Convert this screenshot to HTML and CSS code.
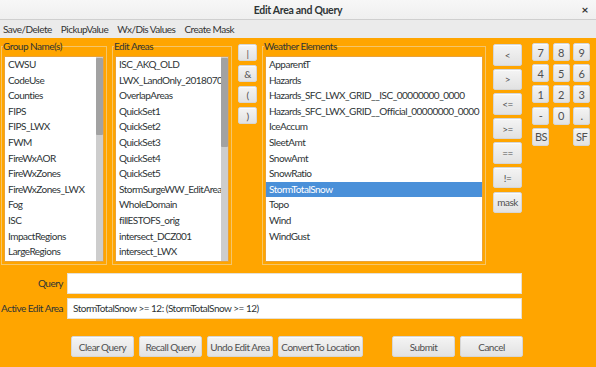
FILE: index.html
```html
<!DOCTYPE html>
<html lang="en">
<head>
    <meta charset="UTF-8">
    <meta name="viewport" content="width=device-width, initial-scale=1.0">
    <title>Edit Area and Query</title>
    <link rel="stylesheet" href="styles.css">
</head>
<body>
    <div class="titlebar">
        <span></span>
        <span class="title">Edit Area and Query</span>
        <span class="close">×</span>
    </div>

    <div class="menubar">
        <span>Save/Delete</span>
        <span>PickupValue</span>
        <span>Wx/Dis Values</span>
        <span>Create Mask</span>
    </div>

    <div class="main">
        <div class="top">
            <fieldset class="box box-groups">
                <legend>Group Name(s)</legend>
                <div class="list">
                    <div class="rows">
                        <div class="row">CWSU</div>
                        <div class="row">CodeUse</div>
                        <div class="row">Counties</div>
                        <div class="row">FIPS</div>
                        <div class="row">FIPS_LWX</div>
                        <div class="row">FWM</div>
                        <div class="row">FireWxAOR</div>
                        <div class="row">FireWxZones</div>
                        <div class="row">FireWxZones_LWX</div>
                        <div class="row">Fog</div>
                        <div class="row">ISC</div>
                        <div class="row">ImpactRegions</div>
                        <div class="row">LargeRegions</div>
                    </div>
                    <div class="scroll"><div class="thumb thumb-groups"></div></div>
                </div>
            </fieldset>

            <fieldset class="box box-areas">
                <legend>Edit Areas</legend>
                <div class="list">
                    <div class="rows">
                        <div class="row">ISC_AKQ_OLD</div>
                        <div class="row">LWX_LandOnly_20180706</div>
                        <div class="row">OverlapAreas</div>
                        <div class="row">QuickSet1</div>
                        <div class="row">QuickSet2</div>
                        <div class="row">QuickSet3</div>
                        <div class="row">QuickSet4</div>
                        <div class="row">QuickSet5</div>
                        <div class="row">StormSurgeWW_EditArea_</div>
                        <div class="row">WholeDomain</div>
                        <div class="row">fillESTOFS_orig</div>
                        <div class="row">intersect_DCZ001</div>
                        <div class="row">intersect_LWX</div>
                    </div>
                    <div class="scroll"><div class="thumb thumb-areas"></div></div>
                </div>
            </fieldset>

            <div class="ops ops-logic">
                <button class="btn">|</button>
                <button class="btn">&amp;</button>
                <button class="btn">(</button>
                <button class="btn">)</button>
            </div>

            <fieldset class="box box-weather">
                <legend>Weather Elements</legend>
                <div class="list">
                    <div class="rows">
                        <div class="row">ApparentT</div>
                        <div class="row">Hazards</div>
                        <div class="row">Hazards_SFC_LWX_GRID__ISC_00000000_0000</div>
                        <div class="row">Hazards_SFC_LWX_GRID__Official_00000000_0000</div>
                        <div class="row">IceAccum</div>
                        <div class="row">SleetAmt</div>
                        <div class="row">SnowAmt</div>
                        <div class="row">SnowRatio</div>
                        <div class="row selected">StormTotalSnow</div>
                        <div class="row">Topo</div>
                        <div class="row">Wind</div>
                        <div class="row">WindGust</div>
                    </div>
                </div>
            </fieldset>

            <div class="ops ops-compare">
                <button class="btn">&lt;</button>
                <button class="btn">&gt;</button>
                <button class="btn">&lt;=</button>
                <button class="btn">&gt;=</button>
                <button class="btn">==</button>
                <button class="btn">!=</button>
                <button class="btn">mask</button>
            </div>

            <div class="numpad">
                <button class="btn">7</button>
                <button class="btn">8</button>
                <button class="btn">9</button>
                <button class="btn">4</button>
                <button class="btn">5</button>
                <button class="btn">6</button>
                <button class="btn">1</button>
                <button class="btn">2</button>
                <button class="btn">3</button>
                <button class="btn">-</button>
                <button class="btn">0</button>
                <button class="btn">.</button>
                <button class="btn side">BS</button>
                <span></span>
                <button class="btn side">SF</button>
            </div>
        </div>

        <div class="form">
            <label class="form-label">Query</label>
            <div class="field"></div>
            <label class="form-label">Active Edit Area</label>
            <div class="field">StormTotalSnow &gt;= 12: (StormTotalSnow &gt;= 12)</div>
        </div>

        <div class="actions">
            <button class="btn w-clear">Clear Query</button>
            <button class="btn w-recall">Recall Query</button>
            <button class="btn w-undo">Undo Edit Area</button>
            <button class="btn w-convert">Convert To Location</button>
            <button class="btn w-submit">Submit</button>
            <button class="btn w-cancel">Cancel</button>
        </div>
    </div>
</body>
</html>
```

FILE: styles.css
```css
* {
    box-sizing: border-box;
}
body {
    margin: 0;
    width: 596px;
    height: 367px;
    overflow: hidden;
    font-family: Lato, "Open Sans", sans-serif;
    font-size: 10px;
    letter-spacing: -0.5px;
    color: #2e3436;
    background-color: #ffa500;
}
.titlebar {
    height: 20px;
    display: grid;
    grid-template-columns: 1fr auto 1fr;
    align-items: center;
    background: linear-gradient(#f7f7f7, #efefef);
    border-bottom: 1px solid #cfcfcf;
}
.title {
    font-weight: bold;
    font-size: 10.5px;
    letter-spacing: -0.3px;
    color: #2e3436;
}
.close {
    justify-self: end;
    padding-right: 8px;
    font-weight: bold;
    font-size: 12px;
    color: #333;
}
.menubar {
    height: 18px;
    display: flex;
    align-items: center;
    gap: 9px;
    padding-left: 3px;
    background-color: #ebebeb;
    color: #333;
}
.main {
    padding: 2px 0 0 1px;
}
.top {
    display: flex;
    align-items: flex-start;
}
.box {
    margin: 0;
    padding: 3px 2px 2px 2px;
    border: 1px solid #f5c56a;
    min-width: 0;
}
.box legend {
    padding: 0;
    margin-left: -1px;
    line-height: 13px;
}
.box-groups {
    width: 106px;
    margin-right: 5px;
}
.box-areas {
    width: 120px;
    margin-right: 6px;
}
.box-weather {
    width: 224px;
    margin-right: 7px;
}
.list {
    height: 206px;
    display: flex;
    background: white;
    border: 1px solid #e9a23a;
    overflow: hidden;
}
.rows {
    flex: 1;
    min-width: 0;
    overflow: hidden;
}
.row {
    height: 15.6px;
    line-height: 15.6px;
    padding-left: 3px;
    white-space: nowrap;
    overflow: hidden;
}
.row.selected {
    background-color: #4a90d9;
    color: white;
}
.scroll {
    width: 7px;
    padding-top: 1px;
    background-color: #cdcdcd;
}
.thumb {
    width: 7px;
    background-color: #a2a2a2;
    border-radius: 1px;
}
.thumb-groups {
    height: 77px;
}
.thumb-areas {
    height: 89px;
}
.btn {
    display: flex;
    align-items: center;
    justify-content: center;
    padding: 0;
    margin: 0;
    font-family: inherit;
    font-size: 10px;
    letter-spacing: -0.5px;
    color: #505050;
    background: linear-gradient(#f4f4f4, #e2e2e2);
    border: 1px solid #d6d6d6;
    border-radius: 2px;
    box-shadow: inset 0 1px 0 #fbfbfb;
    white-space: nowrap;
    overflow: hidden;
}
.ops {
    display: flex;
    flex-direction: column;
    margin-top: 4px;
}
.ops-logic {
    width: 19px;
    gap: 4px;
    margin-right: 5px;
}
.ops-logic .btn {
    height: 17px;
}
.ops-compare {
    width: 29px;
    gap: 3.1px;
    margin-right: 10px;
}
.ops-compare .btn {
    height: 21.5px;
}
.numpad {
    display: grid;
    grid-template-columns: repeat(3, 17px);
    grid-auto-rows: 18px;
    column-gap: 3.5px;
    row-gap: 3.2px;
    margin-top: 3px;
}
.numpad .btn {
    font-size: 11px;
}
.numpad .side {
    justify-content: flex-start;
    padding-left: 2px;
}
.form {
    display: grid;
    grid-template-columns: 62px 455px;
    column-gap: 4px;
    row-gap: 4px;
    margin-top: 8px;
}
.form-label {
    text-align: right;
    line-height: 21px;
    white-space: nowrap;
}
.field {
    height: 21px;
    line-height: 19px;
    padding-left: 5px;
    background: white;
    border: 1px solid #e6e0d4;
}
.actions {
    display: flex;
    gap: 5px;
    margin-top: 17px;
    padding-left: 70px;
}
.actions .btn {
    height: 21px;
}
.w-clear, .w-recall, .w-submit, .w-cancel {
    width: 63px;
}
.w-undo {
    width: 66px;
}
.w-convert {
    width: 85px;
}
.w-submit {
    margin-left: 24px;
}
```
